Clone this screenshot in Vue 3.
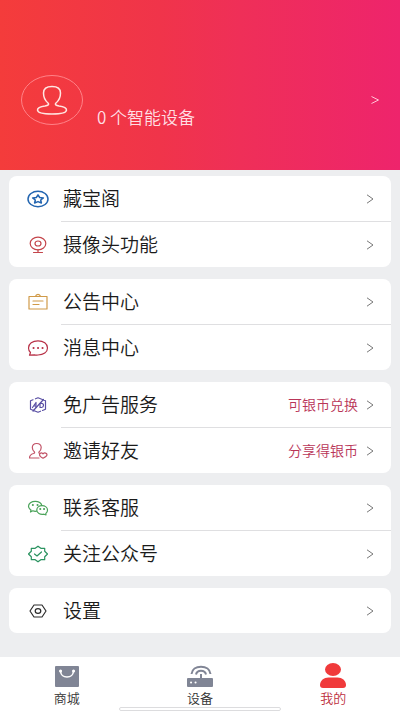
<script setup>
const groups = [
  [
    { icon: 'star', label: '藏宝阁' },
    { icon: 'camera', label: '摄像头功能' },
  ],
  [
    { icon: 'board', label: '公告中心' },
    { icon: 'chat', label: '消息中心' },
  ],
  [
    { icon: 'ad', label: '免广告服务', note: '可银币兑换' },
    { icon: 'invite', label: '邀请好友', note: '分享得银币' },
  ],
  [
    { icon: 'wechat', label: '联系客服' },
    { icon: 'verified', label: '关注公众号' },
  ],
  [{ icon: 'settings', label: '设置' }],
]
</script>

<template>
  <div class="page">
    <header class="profile">
      <svg class="avatar" viewBox="0 0 62 50" aria-hidden="true">
        <ellipse class="ring" cx="31" cy="25" rx="30.5" ry="24.5" />
        <path class="figure" d="M31 11.500C25.500 11.500 22.500 14 22.500 18C22.500 22 24 25.500 27 28C28.500 29.500 27 30.500 24 31C19 31.700 16.500 33 16.500 35C16.500 37.800 22.500 39 31 39S45.500 37.800 45.500 35C45.500 33 43 31.700 38 31C35 30.500 33.500 29.500 35 28C38 25.500 39.500 22 39.500 18C39.500 14 36.500 11.500 31 11.500Z" />
      </svg>
      <p class="devices">0 个智能设备</p>
      <a class="more" href="#profile" aria-label="个人资料">
        <svg viewBox="0 0 8 10"><path d="M0.500 1.500L7.500 5L0.500 8.500" /></svg>
      </a>
    </header>

    <main class="groups">
      <section v-for="(rows, g) in groups" :key="g" class="card">
        <a v-for="row in rows" :key="row.icon" class="row" :href="'#' + row.icon">
          <svg class="icon" :class="row.icon" viewBox="0 0 24 20" aria-hidden="true">
            <template v-if="row.icon === 'star'">
              <ellipse cx="12" cy="10" rx="10" ry="7.800" />
              <path d="M12 5.800L13.700 8.500L17.400 8.900L14.700 11L15.400 14L12 12.600L8.600 14L9.300 11L6.600 8.900L10.300 8.500Z" />
            </template>
            <template v-else-if="row.icon === 'camera'">
              <ellipse cx="12" cy="8.500" rx="7.800" ry="6.300" />
              <ellipse cx="12" cy="8.500" rx="3" ry="2.500" />
              <path d="M12 14.800V17.500M7.500 17.500H16.500" />
            </template>
            <template v-else-if="row.icon === 'board'">
              <path d="M3 4.500H21V17H3ZM7 9H17M7 12.500H13M9.500 4.500Q10 2.300 12 2.300T14.500 4.500" />
            </template>
            <template v-else-if="row.icon === 'chat'">
              <path d="M3.500 17.200L4.500 14.500C3 13.200 2.500 11.500 2.500 10C2.500 5.800 6.500 2.800 12 2.800S21.500 5.800 21.500 10S17.500 17 12 17Q10 17.200 8.500 16.800Z" />
              <path class="dots" d="M7.500 10H7.600M12 10H12.100M16.500 10H16.600" />
            </template>
            <template v-else-if="row.icon === 'ad'">
              <path d="M9.500 3.800L12 2.800L19.500 5.800V14.200L16.500 15.500M14.500 16.200L12 17.200L4.500 14.200V5.800L7 4.800M17.500 4.500L7 16" />
              <path d="M6.500 12.500L10 7.500V12.500M8 11H10M14 8.500V12.500H15.500Q17.500 12.300 17.500 10.300T15.500 8.300H14.500" />
            </template>
            <template v-else-if="row.icon === 'invite'">
              <path d="M13.500 12.200Q12.500 11.800 13 11C14.500 9.800 15.200 8.300 15.200 6.600C15.200 4 13.500 2.500 10.700 2.500S6.300 4 6.300 6.600C6.300 8.500 7.200 10 8.500 11Q9 12 7.500 12.500C5 13.200 3.500 14 3.500 17H13" />
              <path d="M17 12.800C15.500 11.300 13.500 12 13.500 13.700C13.500 15.200 15 16.200 17 17.200C19 16.200 21 15.200 21 13.700C21 12 18.500 11.300 17 12.800Z" />
            </template>
            <template v-else-if="row.icon === 'wechat'">
              <path d="M10.500 13.200Q8.500 13.500 6.800 12.800L4.500 14L5 12C3.300 11 2.500 9.800 2.500 8.300C2.500 5.300 5.500 3.300 9.200 3.300C12.600 3.300 15.200 5 15.800 7.500" />
              <path d="M19.800 15.500L20 17L18 16.200C14 17 10.800 15 10.800 12.200C10.800 9.600 13 7.700 16 7.700S21.500 9.600 21.500 12.200Q21.500 14.200 19.800 15.500Z" />
              <path class="dots" d="M6.800 6.900H6.900M11.500 6.900H11.600M14.200 11H14.300M18 11H18.100" />
            </template>
            <template v-else-if="row.icon === 'verified'">
              <path d="M12 2.200L14.800 4.300H18.700V7.300L21.500 10L18.700 12.700V15.700H14.800L12 17.800L9.200 15.700H5.300V12.700L2.500 10L5.300 7.300V4.300H9.200Z" />
              <path d="M8.500 10L11 12L15.500 8" />
            </template>
            <template v-else>
              <path d="M8 4H16L20 10L16 16H8L4 10Z" />
              <ellipse cx="12" cy="10" rx="2.800" ry="2.300" />
            </template>
          </svg>
          <span class="label">{{ row.label }}</span>
          <span v-if="row.note" class="note">{{ row.note }}</span>
          <svg class="chevron" viewBox="0 0 8 10" aria-hidden="true"><path d="M1 0.800L7 5L1 9.200" /></svg>
        </a>
      </section>
    </main>

    <nav class="tabs">
      <a class="tab" href="#mall">
        <svg viewBox="0 0 28 26" aria-hidden="true">
          <rect x="2" y="4" width="24" height="21" rx="1" />
          <path class="cut" d="M7.500 9.500C8 13 10.500 15 14 15S20 13 20.500 9.500" />
          <path class="cut eyes" d="M7.500 9H7.600M20.500 9H20.600" />
        </svg>
        <span>商城</span>
      </a>
      <a class="tab" href="#devices">
        <svg viewBox="0 0 28 26" aria-hidden="true">
          <rect x="1" y="16" width="26" height="9" rx="1" />
          <path class="wave" d="M15 17V12M10 12.500C10.500 10 12.500 8.700 15 8.700S19.500 10 20 12.500M5.500 12C6 7.500 10 4.700 15 4.700S24 7.500 24.500 12" />
          <path class="cut dot" d="M5 20.500H5.100M9.500 20.500H9.600" />
        </svg>
        <span>设备</span>
      </a>
      <a class="tab active" href="#mine" aria-current="page">
        <svg viewBox="0 0 28 26" aria-hidden="true">
          <ellipse cx="14" cy="7.500" rx="8" ry="6.500" />
          <path d="M1 23C1 18.500 5 15.500 9.500 15.500H18.500C23 15.500 27 18.500 27 23Q27 26 24 26H4Q1 26 1 23Z" />
        </svg>
        <span>我的</span>
      </a>
      <span class="home-bar"></span>
    </nav>
  </div>
</template>

<style>
body {
  margin: 0;
  background: #edeef0;
}
</style>

<style scoped>
.page {
  display: flex;
  flex-direction: column;
  min-height: 100vh;
  background: #edeef0;
  font-family: "Noto Sans CJK SC", "Noto Sans", sans-serif;
  font-weight: 350;
}
a {
  color: inherit;
  text-decoration: none;
}
svg {
  display: block;
  flex: none;
  fill: none;
}
.profile {
  display: flex;
  align-items: center;
  box-sizing: border-box;
  height: 170px;
  padding: 30px 21px 0;
  background: linear-gradient(90deg, #f43c3b 0%, #f0344a 40%, #ef2f58 60%, #ee246c 100%);
  color: #ffdfe4;
}
.avatar {
  width: 62px;
  height: 50px;
}
.ring {
  stroke: #ff8288;
}
.figure {
  stroke: #ffe6e2;
  stroke-width: 1.5;
}
.devices {
  flex: 1;
  margin: 0;
  padding: 34px 0 0 14px;
  font-size: 17px;
  line-height: 20px;
}
.more svg {
  width: 8px;
  height: 10px;
  stroke: #ffc4d6;
}
.groups {
  display: flex;
  flex: 1;
  flex-direction: column;
  gap: 12px;
  padding: 6px 9px 24px;
}
.card {
  overflow: hidden;
  border-radius: 8px;
  background: #fff;
}
.row {
  display: flex;
  align-items: center;
  height: 45px;
  padding: 0 17px;
  color: #1b1b1b;
}
.row + .row {
  border-top: 1px solid transparent;
  background: linear-gradient(#dfdfe1, #dfdfe1) 52px 0 / 100% 1px no-repeat border-box;
}
.icon {
  width: 24px;
  height: 20px;
  margin-right: 13px;
  stroke: currentColor;
  stroke-width: 1.2;
  stroke-linejoin: round;
  stroke-linecap: round;
}
.dots {
  stroke-width: 2;
}
.star { color: #2365b0; stroke-width: 1.5; }
.camera { color: #c4454b; }
.board { color: #d09a48; }
.chat { color: #b83248; }
.ad { color: #5a50a4; }
.invite { color: #c25468; }
.wechat { color: #4ba35a; }
.verified { color: #2b9360; }
.settings { color: #2c2c2c; }
.label {
  flex: 1;
  padding-bottom: 2px;
  font-size: 19px;
  line-height: 24px;
}
.note {
  margin-right: 8px;
  padding-bottom: 2px;
  color: #b93558;
  font-size: 14px;
  line-height: 20px;
}
.chevron {
  width: 8px;
  height: 10px;
  stroke: #777;
}
.tabs {
  position: relative;
  display: grid;
  grid-template-columns: repeat(3, 1fr);
  height: 54px;
  background: #fff;
}
.tab {
  display: flex;
  flex-direction: column;
  align-items: center;
  gap: 2px;
  padding-top: 5px;
  color: #333;
  font-size: 13px;
  line-height: 16px;
}
.tab svg {
  width: 28px;
  height: 26px;
  fill: #808595;
}
.tab .cut {
  fill: none;
  stroke: #fff;
  stroke-width: 1.5;
  stroke-linecap: round;
}
.tab .eyes {
  stroke-width: 3;
}
.tab .dot {
  stroke-width: 2;
}
.tab .wave {
  fill: none;
  stroke: #808595;
  stroke-width: 2;
}
.tab.active {
  color: #bd2f3d;
}
.tab.active svg {
  fill: #f03a3b;
}
.home-bar {
  position: absolute;
  bottom: 0;
  left: 50%;
  box-sizing: border-box;
  width: 162px;
  height: 4px;
  border: 1px solid #dcdcde;
  border-radius: 2px;
  background: #fff;
  transform: translateX(-50%);
}
</style>
